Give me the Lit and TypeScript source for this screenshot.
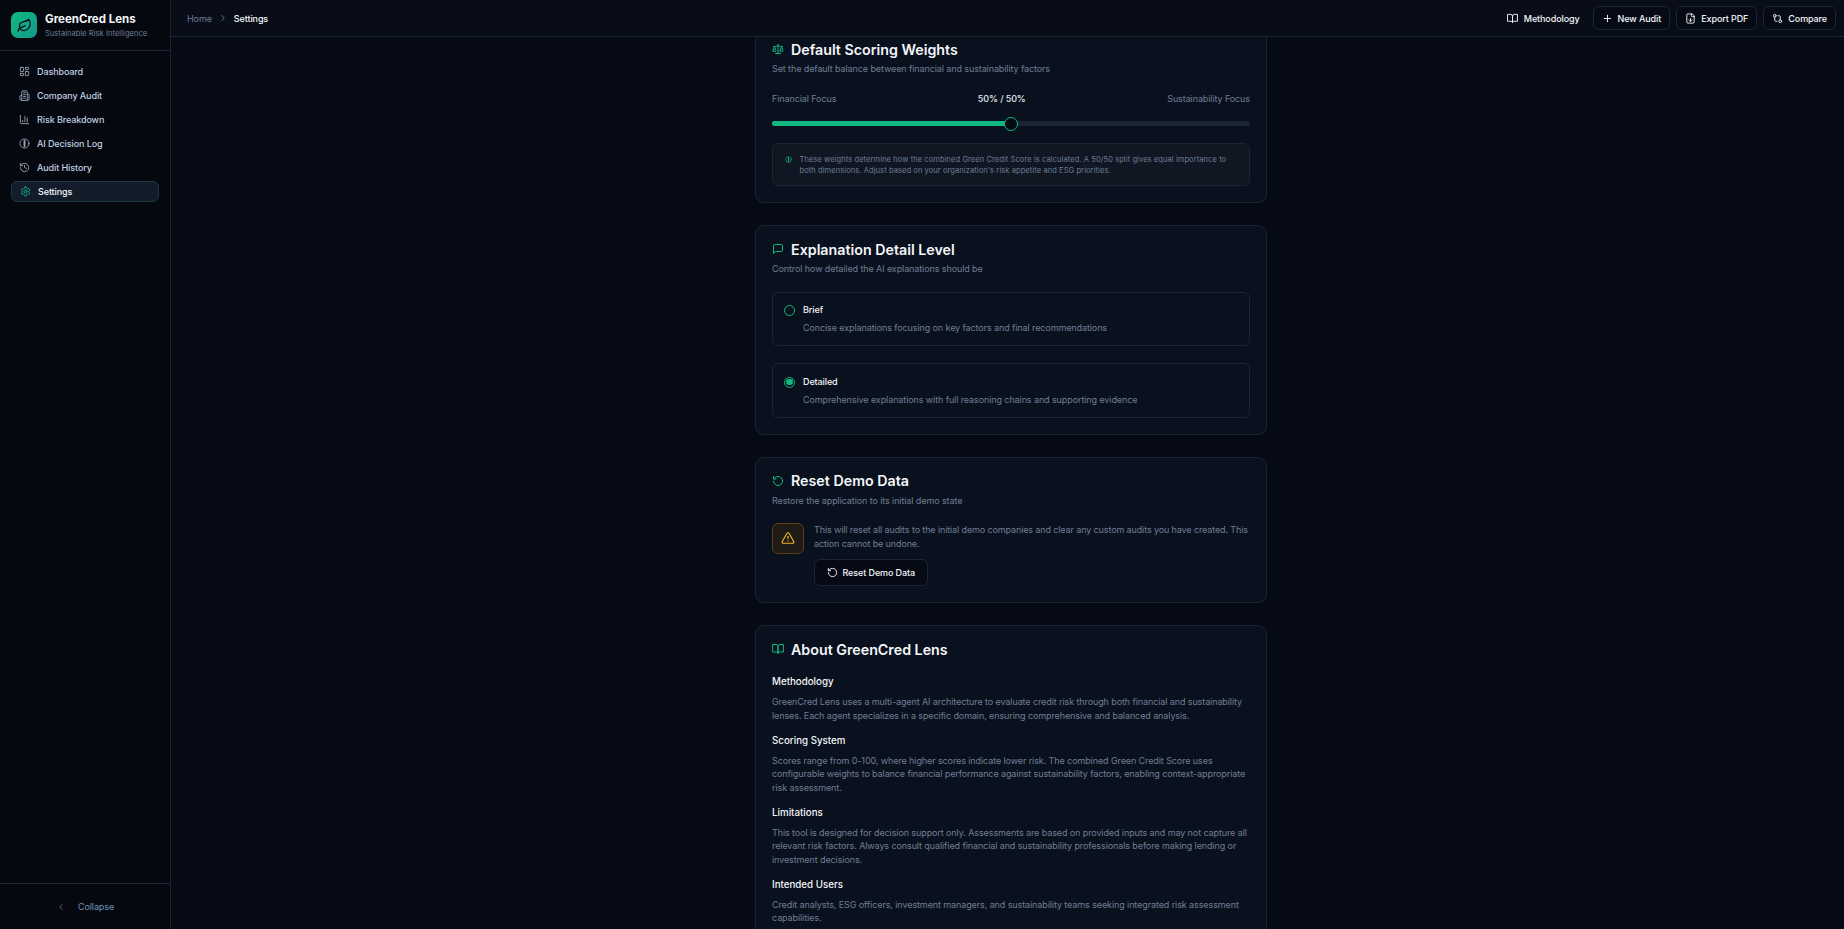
import { LitElement, html, css, svg } from 'lit';
import { customElement } from 'lit/decorators.js';

const ICONS: Record<string, unknown> = {
  leaf: svg`<path d="M11 20A7 7 0 0 1 9.8 6.1C15.5 5 17 4.48 19 2c1 2 2 4.18 2 8 0 5.5-4.78 10-10 10Z"/><path d="M2 21c0-3 1.85-5.36 5.08-6C9.5 14.52 12 13 13 12"/>`,
  dashboard: svg`<rect x="3" y="3" width="7" height="9" rx="1"/><rect x="14" y="3" width="7" height="5" rx="1"/><rect x="14" y="12" width="7" height="9" rx="1"/><rect x="3" y="16" width="7" height="5" rx="1"/>`,
  building: svg`<path d="M6 22V4a2 2 0 0 1 2-2h8a2 2 0 0 1 2 2v18Z"/><path d="M6 12H4a2 2 0 0 0-2 2v6a2 2 0 0 0 2 2h2"/><path d="M18 9h2a2 2 0 0 1 2 2v9a2 2 0 0 1-2 2h-2"/><path d="M10 6h4"/><path d="M10 10h4"/><path d="M10 14h4"/><path d="M10 18h4"/>`,
  chart: svg`<path d="M3 3v16a2 2 0 0 0 2 2h16"/><path d="M18 17V9"/><path d="M13 17V5"/><path d="M8 17v-3"/>`,
  ring: svg`<circle cx="12" cy="12" r="10"/><path d="M12 6v12" stroke-width="4"/>`,
  history: svg`<path d="M3 12a9 9 0 1 0 9-9 9.75 9.75 0 0 0-6.74 2.74L3 8"/><path d="M3 3v5h5"/><path d="M12 7v5l4 2"/>`,
  settings: svg`<path d="M12.22 2h-.44a2 2 0 0 0-2 2v.18a2 2 0 0 1-1 1.73l-.43.25a2 2 0 0 1-2 0l-.15-.08a2 2 0 0 0-2.73.73l-.22.38a2 2 0 0 0 .73 2.73l.15.1a2 2 0 0 1 1 1.72v.51a2 2 0 0 1-1 1.74l-.15.09a2 2 0 0 0-.73 2.73l.22.38a2 2 0 0 0 2.73.73l.15-.08a2 2 0 0 1 2 0l.43.25a2 2 0 0 1 1 1.73V20a2 2 0 0 0 2 2h.44a2 2 0 0 0 2-2v-.18a2 2 0 0 1 1-1.73l.43-.25a2 2 0 0 1 2 0l.15.08a2 2 0 0 0 2.73-.73l.22-.39a2 2 0 0 0-.73-2.73l-.15-.08a2 2 0 0 1-1-1.74v-.5a2 2 0 0 1 1-1.74l.15-.09a2 2 0 0 0 .73-2.73l-.22-.38a2 2 0 0 0-2.73-.73l-.15.08a2 2 0 0 1-2 0l-.43-.25a2 2 0 0 1-1-1.73V4a2 2 0 0 0-2-2z"/><circle cx="12" cy="12" r="3"/>`,
  book: svg`<path d="M2 3h6a4 4 0 0 1 4 4v14a3 3 0 0 0-3-3H2z"/><path d="M22 3h-6a4 4 0 0 0-4 4v14a3 3 0 0 1 3-3h7z"/>`,
  plus: svg`<path d="M5 12h14"/><path d="M12 5v14"/>`,
  fileDown: svg`<path d="M15 2H6a2 2 0 0 0-2 2v16a2 2 0 0 0 2 2h12a2 2 0 0 0 2-2V7Z"/><path d="M14 2v4a2 2 0 0 0 2 2h4"/><path d="M12 18v-6"/><path d="m9 15 3 3 3-3"/>`,
  compare: svg`<circle cx="18" cy="18" r="3"/><circle cx="6" cy="6" r="3"/><path d="M13 6h3a2 2 0 0 1 2 2v7"/><path d="M11 18H8a2 2 0 0 1-2-2V9"/>`,
  scale: svg`<path d="m16 16 3-8 3 8c-.87.65-1.92 1-3 1s-2.13-.35-3-1Z"/><path d="m2 16 3-8 3 8c-.87.65-1.92 1-3 1s-2.13-.35-3-1Z"/><path d="M7 21h10"/><path d="M12 3v18"/><path d="M3 7h2c2 0 5-1 7-2 2 1 5 2 7 2h2"/>`,
  message: svg`<path d="M21 15a2 2 0 0 1-2 2H7l-4 4V5a2 2 0 0 1 2-2h14a2 2 0 0 1 2 2z"/>`,
  reset: svg`<path d="M3 12a9 9 0 1 0 9-9 9.75 9.75 0 0 0-6.74 2.74L3 8"/><path d="M3 3v5h5"/>`,
  alert: svg`<path d="m21.73 18-8-14a2 2 0 0 0-3.48 0l-8 14A2 2 0 0 0 4 21h16a2 2 0 0 0 1.73-3"/><path d="M12 9v4"/><path d="M12 17h.01"/>`,
  right: svg`<path d="m9 18 6-6-6-6"/>`,
  left: svg`<path d="m15 18-6-6 6-6"/>`,
};

function icon(name: string, size: number, cls = '') {
  return html`<svg class="icon ${cls}" width=${size} height=${size} viewBox="0 0 24 24" fill="none" stroke="currentColor" stroke-width="2" stroke-linecap="round" stroke-linejoin="round">${ICONS[name]}</svg>`;
}

const NAV = [
  { label: 'Dashboard', icon: 'dashboard' },
  { label: 'Company Audit', icon: 'building' },
  { label: 'Risk Breakdown', icon: 'chart' },
  { label: 'AI Decision Log', icon: 'ring' },
  { label: 'Audit History', icon: 'history' },
  { label: 'Settings', icon: 'settings', active: true },
];

const ABOUT = [
  {
    title: 'Methodology',
    text: 'GreenCred Lens uses a multi-agent AI architecture to evaluate credit risk through both financial and sustainability lenses. Each agent specializes in a specific domain, ensuring comprehensive and balanced analysis.',
  },
  {
    title: 'Scoring System',
    text: 'Scores range from 0-100, where higher scores indicate lower risk. The combined Green Credit Score uses configurable weights to balance financial performance against sustainability factors, enabling context-appropriate risk assessment.',
  },
  {
    title: 'Limitations',
    text: 'This tool is designed for decision support only. Assessments are based on provided inputs and may not capture all relevant risk factors. Always consult qualified financial and sustainability professionals before making lending or investment decisions.',
  },
  {
    title: 'Intended Users',
    text: 'Credit analysts, ESG officers, investment managers, and sustainability teams seeking integrated risk assessment capabilities.',
  },
];

@customElement('app-root')
export class AppRoot extends LitElement {
  static styles = css`
    :host {
      display: flex;
      height: 929px;
      overflow: hidden;
      background: #060a14;
      color: #f4f6f9;
      font-family: Inter, 'Liberation Sans', sans-serif;
      font-size: 9px;
      letter-spacing: -0.1px;
    }

    .icon {
      display: block;
      flex: none;
    }

    /* sidebar */
    .sidebar {
      width: 170px;
      flex: none;
      display: flex;
      flex-direction: column;
      border-right: 1px solid #1c2536;
      background: #05080f;
    }

    .brand {
      height: 50px;
      flex: none;
      display: flex;
      align-items: center;
      gap: 8px;
      padding: 0 11px;
      border-bottom: 1px solid #1c2536;
    }

    .brand-text {
      padding-top: 2px;
    }

    .logo {
      width: 26px;
      height: 26px;
      border-radius: 7px;
      background: linear-gradient(135deg, #10b981, #14988c);
      color: #07101a;
      display: flex;
      align-items: center;
      justify-content: center;
    }

    .brand-name {
      font-size: 11.5px;
      font-weight: 700;
      line-height: 15px;
      letter-spacing: 0;
    }

    .brand-sub {
      font-size: 7.5px;
      color: #6f7e94;
      line-height: 12px;
      letter-spacing: 0.05px;
      margin-top: 1px;
    }

    nav {
      flex: 1;
      padding: 10px 11px;
      display: flex;
      flex-direction: column;
      gap: 3px;
    }

    .nav-item {
      height: 21px;
      box-sizing: border-box;
      display: flex;
      align-items: center;
      gap: 7.5px;
      padding: 0 7.5px;
      border-radius: 6px;
      color: #c0cfe0;
      font-weight: 500;
    }

    .nav-item .icon {
      color: #94a3b8;
    }

    .nav-item.active {
      background: #131c2a;
      border: 1px solid #173c3b;
      color: #f4f6f9;
    }

    .nav-item.active .icon {
      color: #10b981;
    }

    .collapse {
      height: 45px;
      flex: none;
      display: flex;
      align-items: center;
      justify-content: center;
      gap: 12px;
      border-top: 1px solid #1c2536;
      color: #6f93bd;
    }

    .collapse .icon {
      color: #64748b;
    }

    /* top bar and content */
    .main {
      flex: 1;
      min-width: 0;
      display: flex;
      flex-direction: column;
    }

    .topbar {
      position: relative;
      z-index: 1;
      height: 36px;
      flex: none;
      display: flex;
      align-items: center;
      justify-content: space-between;
      padding: 0 8px 0 16px;
      border-bottom: 1px solid #1c2536;
      background: #080d18;
    }

    .crumbs {
      display: flex;
      align-items: center;
      gap: 6px;
      color: #6f7e94;
    }

    .crumbs b {
      font-weight: 500;
      color: #f4f6f9;
    }

    .actions {
      display: flex;
      align-items: center;
      gap: 6px;
    }

    .btn {
      display: flex;
      align-items: center;
      gap: 5px;
      height: 24px;
      padding: 0 8px;
      box-sizing: border-box;
      border: 1px solid #1c2536;
      border-radius: 6px;
      background: #060a14;
      font-weight: 500;
      color: #f4f6f9;
    }

    .btn.ghost {
      border-color: transparent;
      background: none;
      padding-right: 6px;
      gap: 5.5px;
    }

    .content {
      flex: 1;
      overflow: hidden;
      display: flex;
      flex-direction: column;
      align-items: center;
      gap: 22px;
      padding-left: 7px;
      margin-top: -12px;
    }

    .card {
      width: 512px;
      box-sizing: border-box;
      flex: none;
      padding: 12px 16px 16px;
      border: 1px solid #1a2233;
      border-radius: 9px;
      background: #0a111e;
    }

    .card-head {
      display: flex;
      align-items: center;
      gap: 7px;
      height: 24px;
      box-sizing: border-box;
      padding-bottom: 2px;
      font-size: 14.25px;
      font-weight: 600;
      letter-spacing: 0;
    }

    .card-head .icon {
      color: #10b981;
    }

    .card-sub {
      color: #6f7e94;
      line-height: 13.5px;
    }

    .slider-labels {
      display: flex;
      justify-content: space-between;
      margin-top: 16px;
      color: #6f7e94;
      line-height: 13.5px;
    }

    .slider-labels b {
      font-weight: 500;
      color: #e2e8f0;
    }

    .track {
      position: relative;
      height: 5px;
      margin-top: 16px;
      border-radius: 3px;
      background: #1c2536;
    }

    .fill {
      height: 100%;
      border-radius: 3px;
      background: #10b981;
    }

    .thumb {
      position: absolute;
      top: 50%;
      width: 14px;
      height: 14px;
      box-sizing: border-box;
      transform: translate(-50%, -50%);
      border: 1.25px solid #10b981;
      border-radius: 50%;
      background: #060a14;
    }

    .note {
      display: flex;
      align-items: flex-start;
      gap: 7.5px;
      margin-top: 16.5px;
      padding: 10.5px 16px 8.5px 12px;
      border: 1px solid #1c2536;
      border-radius: 6px;
      background: #101723;
      color: #6f7e94;
      font-size: 7.5px;
      line-height: 11.25px;
      letter-spacing: 0.085px;
    }

    .note .icon {
      color: #10b981;
      margin-top: 2px;
    }

    .options {
      display: flex;
      flex-direction: column;
      gap: 17px;
      margin-top: 16px;
    }

    .option {
      display: flex;
      gap: 8px;
      height: 54.5px;
      box-sizing: border-box;
      padding: 10.5px 11px;
      border: 1px solid #1c2536;
      border-radius: 6px;
    }

    .radio {
      width: 11px;
      height: 11px;
      box-sizing: border-box;
      flex: none;
      margin-top: 2px;
      border: 1.25px solid #10b981;
      border-radius: 50%;
      position: relative;
    }

    .radio.on::after {
      content: '';
      position: absolute;
      inset: 1.25px;
      border-radius: 50%;
      background: #10b981;
    }

    .option-name {
      font-weight: 500;
      line-height: 13.5px;
    }

    .option-text {
      color: #6f7e94;
      line-height: 13.5px;
      margin-top: 4.5px;
    }

    .warn {
      display: flex;
      gap: 10px;
      margin-top: 16px;
    }

    .warn-icon {
      width: 32px;
      height: 30.5px;
      box-sizing: border-box;
      flex: none;
      display: flex;
      align-items: center;
      justify-content: center;
      border: 1px solid #5a3f1a;
      border-radius: 6px;
      background: #1f1c17;
      color: #f5b128;
    }

    .warn p {
      margin: 0;
      color: #6f7e94;
      line-height: 13.5px;
      letter-spacing: -0.12px;
    }

    .warn .btn {
      display: inline-flex;
      height: 27px;
      margin-top: 9px;
      padding: 0 11.5px;
    }

    .about h4 {
      margin: 0;
      font-size: 9.75px;
      font-weight: 500;
      line-height: 14px;
      letter-spacing: 0;
      color: #f4f6f9;
    }

    .about h4.first {
      margin-top: 13px;
    }

    .about p {
      margin: 6px 0 11.5px;
      color: #6f7e94;
      line-height: 13.5px;
    }
  `;

  render() {
    return html`
      <aside class="sidebar">
        <div class="brand">
          <div class="logo">${icon('leaf', 15)}</div>
          <div class="brand-text">
            <div class="brand-name">GreenCred Lens</div>
            <div class="brand-sub">Sustainable Risk Intelligence</div>
          </div>
        </div>
        <nav>
          ${NAV.map(
            (item) => html`
              <div class="nav-item ${item.active ? 'active' : ''}">
                ${icon(item.icon, 11)}<span>${item.label}</span>
              </div>
            `
          )}
        </nav>
        <div class="collapse">${icon('left', 10)}<span>Collapse</span></div>
      </aside>
      <div class="main">
        <header class="topbar">
          <div class="crumbs">
            <span>Home</span>${icon('right', 10)}<b>Settings</b>
          </div>
          <div class="actions">
            <div class="btn ghost">${icon('book', 11)}Methodology</div>
            <div class="btn">${icon('plus', 11)}New Audit</div>
            <div class="btn">${icon('fileDown', 11)}Export PDF</div>
            <div class="btn">${icon('compare', 11)}Compare</div>
          </div>
        </header>
        <div class="content">
          <section class="card">
            <div class="card-head">${icon('scale', 12)}Default Scoring Weights</div>
            <div class="card-sub">Set the default balance between financial and sustainability factors</div>
            <div class="slider-labels">
              <span>Financial Focus</span><b>50% / 50%</b><span>Sustainability Focus</span>
            </div>
            <div class="track">
              <div class="fill" style="width: 50%"></div>
              <div class="thumb" style="left: 50%"></div>
            </div>
            <div class="note">
              ${icon('ring', 7)}
              <span>These weights determine how the combined Green Credit Score is calculated. A 50/50 split gives equal importance to both dimensions. Adjust based on your organization's risk appetite and ESG priorities.</span>
            </div>
          </section>

          <section class="card">
            <div class="card-head">${icon('message', 12)}Explanation Detail Level</div>
            <div class="card-sub">Control how detailed the AI explanations should be</div>
            <div class="options">
              <div class="option">
                <div class="radio"></div>
                <div>
                  <div class="option-name">Brief</div>
                  <div class="option-text">Concise explanations focusing on key factors and final recommendations</div>
                </div>
              </div>
              <div class="option">
                <div class="radio on"></div>
                <div>
                  <div class="option-name">Detailed</div>
                  <div class="option-text">Comprehensive explanations with full reasoning chains and supporting evidence</div>
                </div>
              </div>
            </div>
          </section>

          <section class="card">
            <div class="card-head">${icon('reset', 12)}Reset Demo Data</div>
            <div class="card-sub">Restore the application to its initial demo state</div>
            <div class="warn">
              <div class="warn-icon">${icon('alert', 14)}</div>
              <div>
                <p>This will reset all audits to the initial demo companies and clear any custom audits you have created. This action cannot be undone.</p>
                <div class="btn">${icon('reset', 11)}Reset Demo Data</div>
              </div>
            </div>
          </section>

          <section class="card about">
            <div class="card-head">${icon('book', 12)}About GreenCred Lens</div>
            ${ABOUT.map(
              (block, i) => html`
                <h4 class=${i === 0 ? 'first' : ''}>${block.title}</h4>
                <p>${block.text}</p>
              `
            )}
          </section>
        </div>
      </div>
    `;
  }
}

declare global {
  interface HTMLElementTagNameMap {
    'app-root': AppRoot;
  }
}
